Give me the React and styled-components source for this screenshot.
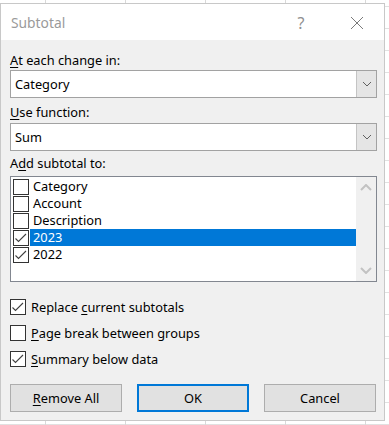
import React from "react";
import styled, { createGlobalStyle } from "styled-components";

const Global = createGlobalStyle`
  html, body { margin: 0; padding: 0; }
  body {
    width: 389px;
    height: 425px;
    overflow: hidden;
    background-color: #ffffff;
    background-image:
      linear-gradient(to right, #d9d9d9 1px, transparent 1px),
      linear-gradient(to bottom, #e1e1e1 1px, transparent 1px);
    background-size: 80px 22px, 80px 22px;
    background-position: 45px 0, 0 6px;
    font-family: "Noto Sans", "Open Sans", sans-serif;
  }
`;

const Dialog = styled.div`
  margin-top: 3px;
  width: 385px;
  height: 418px;
  box-sizing: border-box;
  border: 1px solid #c8c8c8;
  background: #f0f0f0;
  display: flex;
  flex-direction: column;
`;

const TitleBar = styled.div`
  flex: none;
  height: 36px;
  box-sizing: border-box;
  background: #ffffff;
  display: flex;
  align-items: center;
  padding-left: 10px;
  padding-top: 1px;
  color: #9a9a9a;
  font-size: 13.8px;
`;

const Title = styled.div`
  flex: 1;
`;

const Help = styled.div`
  width: 20px;
  text-align: center;
  font-size: 16px;
  color: #8f8f8f;
  margin-right: 38px;
`;

const CloseBtn = styled.div`
  width: 16px;
  height: 16px;
  margin-right: 19px;
  display: flex;
  align-items: center;
  justify-content: center;
`;

const Body = styled.div`
  flex: 1;
  padding: 10px 7px 9px 9px;
  display: flex;
  flex-direction: column;
  font-size: 12.8px;
  color: #000;
  & > * { flex-shrink: 0; }
`;

const Label = styled.div`
  height: 20px;
  line-height: 20px;
  margin-top: ${(p) => p.$top || 0}px;
  margin-bottom: ${(p) => p.$bottom || 0}px;
`;

const Key = styled.span`
  text-decoration: underline;
  text-underline-offset: 2px;
`;

const Combo = styled.div`
  height: 28px;
  box-sizing: border-box;
  border: 1px solid #a2a2a2;
  background: #fff;
  display: flex;
  align-items: stretch;
`;

const ComboText = styled.div`
  flex: 1;
  padding-left: 4px;
  display: flex;
  align-items: center;
`;

const DropButton = styled.div`
  width: 20px;
  box-sizing: border-box;
  background: #e5e5e5;
  border-left: 1px solid #c4c4c4;
  display: flex;
  align-items: center;
  justify-content: center;
`;

const ListBox = styled.div`
  height: 106px;
  box-sizing: border-box;
  border: 1px solid #828790;
  background: #fff;
  display: flex;
`;

const Items = styled.div`
  flex: 1;
  padding: 1px 0 0 2px;
  display: flex;
  flex-direction: column;
`;

const Item = styled.div`
  height: 17px;
  display: flex;
  align-items: center;
`;

const ItemText = styled.div`
  flex: 1;
  height: 17px;
  line-height: 17px;
  margin-left: 1px;
  padding-left: 3px;
  background: ${(p) => (p.$selected ? "#0078d7" : "transparent")};
  color: ${(p) => (p.$selected ? "#fff" : "#000")};
`;

const ScrollBar = styled.div`
  width: 20px;
  background: #f0f0f0;
  display: flex;
  flex-direction: column;
  justify-content: space-between;
  align-items: center;
  padding: 7px 0 7px;
`;

const Box = styled.div`
  width: 16px;
  height: 16px;
  box-sizing: border-box;
  border: 1px solid #333333;
  background: #fff;
  flex: none;
  display: flex;
  align-items: center;
  justify-content: center;
`;

const Options = styled.div`
  margin-top: 17px;
  display: flex;
  flex-direction: column;
  gap: 10px;
`;

const Option = styled.div`
  display: flex;
  align-items: center;
  height: 16px;
  gap: 5px;
`;

const Buttons = styled.div`
  margin-top: 17px;
  display: grid;
  grid-template-columns: repeat(3, 112px);
  gap: 15px;
`;

const Button = styled.div`
  height: 28px;
  box-sizing: border-box;
  border: ${(p) => (p.$default ? "2px solid #0078d7" : "1px solid #adadad")};
  background: #e1e1e1;
  display: flex;
  align-items: center;
  justify-content: center;
`;

const Check = () => (
  <svg width="14" height="14" viewBox="0 0 14 14">
    <path d="M1.5 7.5 L4.5 10.5 L12 3" fill="none" stroke="#404040" strokeWidth="1.1" />
  </svg>
);

const CheckBox = ({ checked }) => <Box>{checked && <Check />}</Box>;

const Chevron = ({ up, w = 9, h = 5, color = "#606060", sw = 1 }) => (
  <svg width={w + 2} height={h + 2} viewBox={`-1 -1 ${w + 2} ${h + 2}`}>
    <path
      d={up ? `M0 ${h} L${w / 2} 0 L${w} ${h}` : `M0 0 L${w / 2} ${h} L${w} 0`}
      fill="none"
      stroke={color}
      strokeWidth={sw}
    />
  </svg>
);

const ComboBox = ({ value }) => (
  <Combo>
    <ComboText>{value}</ComboText>
    <DropButton>
      <Chevron w={8} h={4} />
    </DropButton>
  </Combo>
);

const fields = [
  { name: "Category", checked: false },
  { name: "Account", checked: false },
  { name: "Description", checked: false },
  { name: "2023", checked: true, selected: true },
  { name: "2022", checked: true },
];

export default function App() {
  return (
    <>
      <Global />
      <Dialog>
        <TitleBar>
          <Title>Subtotal</Title>
          <Help>?</Help>
          <CloseBtn>
            <svg width="14" height="14" viewBox="0 0 14 14">
              <path d="M1 1 L13 13 M13 1 L1 13" stroke="#7a7a7a" strokeWidth="1" />
            </svg>
          </CloseBtn>
        </TitleBar>
        <Body>
          <Label>
            <Key>A</Key>t each change in:
          </Label>
          <ComboBox value="Category" />
          <Label $top={4} $bottom={1}>
            <Key>U</Key>se function:
          </Label>
          <ComboBox value="Sum" />
          <Label $top={2} $bottom={3}>
            A<Key>d</Key>d subtotal to:
          </Label>
          <ListBox>
            <Items>
              {fields.map((f) => (
                <Item key={f.name}>
                  <CheckBox checked={f.checked} />
                  <ItemText $selected={f.selected}>{f.name}</ItemText>
                </Item>
              ))}
            </Items>
            <ScrollBar>
              <Chevron up w={10} h={5} color="#c2c2c2" sw={2} />
              <Chevron w={10} h={5} color="#c2c2c2" sw={2} />
            </ScrollBar>
          </ListBox>
          <Options>
            <Option>
              <CheckBox checked />
              <span>
                Replace <Key>c</Key>urrent subtotals
              </span>
            </Option>
            <Option>
              <CheckBox />
              <span>
                <Key>P</Key>age break between groups
              </span>
            </Option>
            <Option>
              <CheckBox checked />
              <span>
                <Key>S</Key>ummary below data
              </span>
            </Option>
          </Options>
          <Buttons>
            <Button>
              <span>
                <Key>R</Key>emove All
              </span>
            </Button>
            <Button $default>OK</Button>
            <Button>Cancel</Button>
          </Buttons>
        </Body>
      </Dialog>
    </>
  );
}
